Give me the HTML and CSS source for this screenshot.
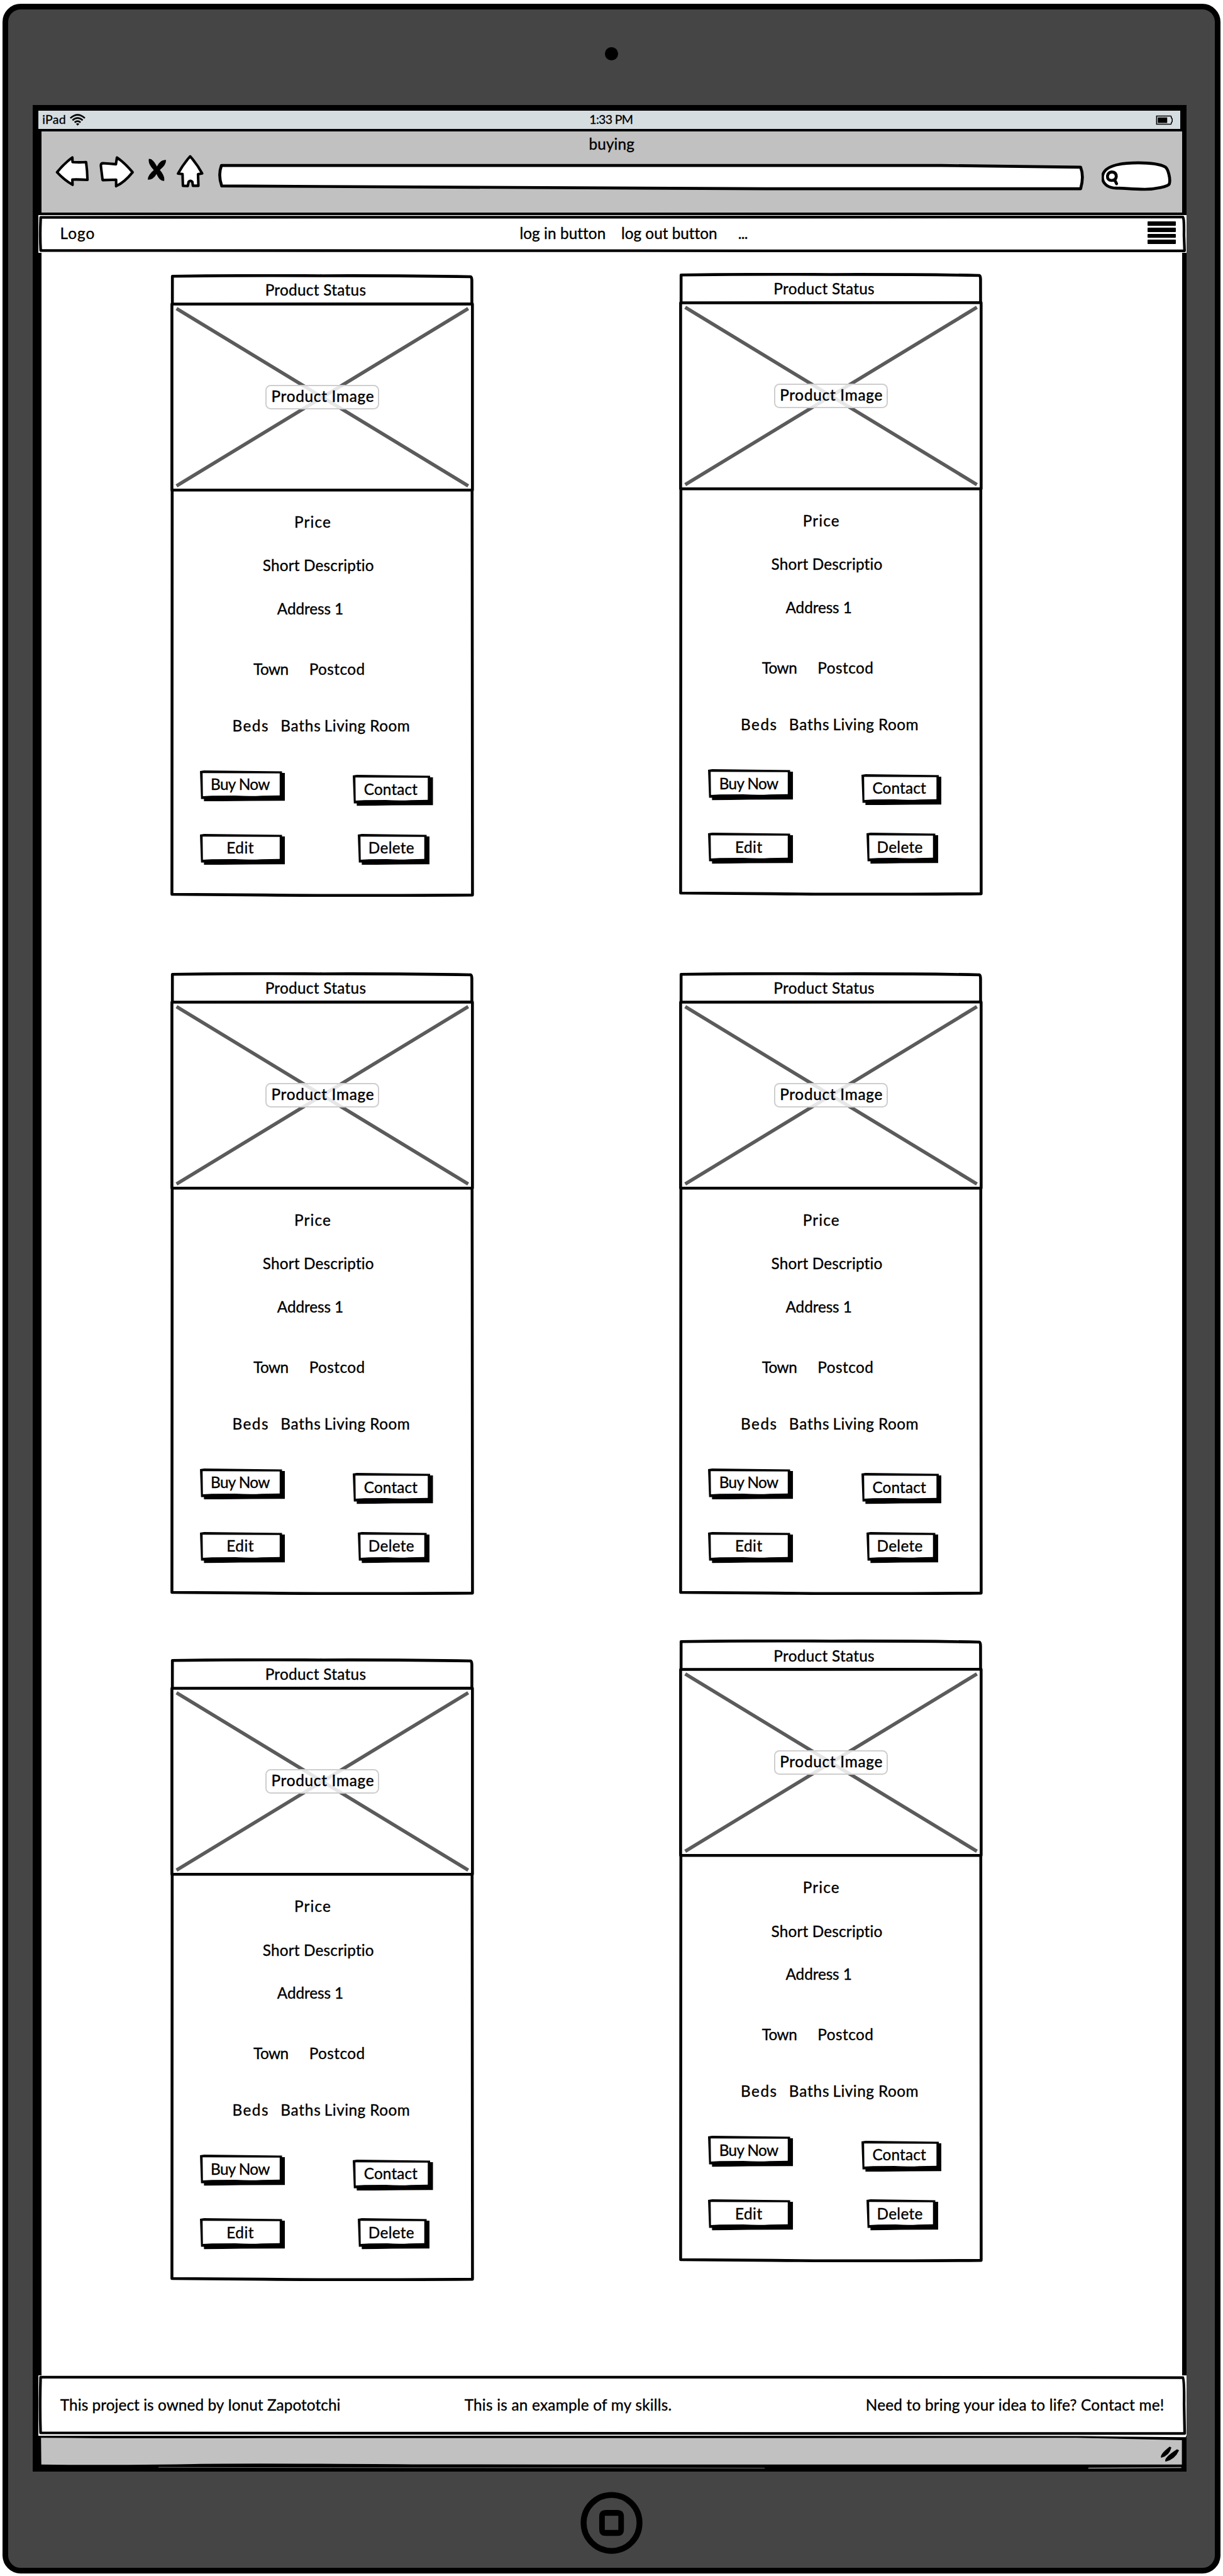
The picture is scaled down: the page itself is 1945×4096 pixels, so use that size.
FILE: index.html
```html
<!DOCTYPE html>
<html lang="en">
<head>
<meta charset="utf-8">
<title>buying</title>
<link rel="stylesheet" href="styles.css">
</head>
<body>
<svg class="defs" width="0" height="0" aria-hidden="true">
  <symbol id="card-outline" viewBox="0 0 516 1058">
    <path d="M3.4 3.4Q130 1.8 258 2.6Q400 2.2 510 4.2Q512.4 5 512.2 12L512.8 500L513.3 1054.6Q300 1056.2 160 1054.6L2.6 1053.4Q1.8 700 3 400Z" fill="none" stroke="#000" stroke-width="4.9" stroke-linejoin="round"/>
    <path d="M2.6 50.8L513.2 50.4V366.8H2.6Z" fill="#fff" stroke="#000" stroke-width="4.9" stroke-linejoin="round"/>
    <path d="M10.4 58.4L506 359.6M506 58.4L10.4 359.6" stroke="#5b5b5c" stroke-width="6"/>
  </symbol>
  <symbol id="btn-lg" viewBox="0 0 144.5 53">
    <path d="M0 1.2L7 0L139.5 1.5V4.4H144.5V51.5Q70 51.4 6.8 53V48.6H1.8Z"/>
    <path d="M4.5 4.6L135.5 5.2V42.4L105 43Q85 44.4 60 42.8L20 42.9L5 43.9Z" fill="#fff"/>
  </symbol>
  <symbol id="btn-md" viewBox="0 0 136.5 53">
    <path d="M0 1.2L7 0L131.5 1.5V4.4H136.5V51.5Q70 51.4 6.8 53V48.6H1.8Z"/>
    <path d="M4.5 4.6L127.5 5.2V42.4L99 43Q79 44.4 56 42.8L20 42.9L5 43.9Z" fill="#fff"/>
  </symbol>
  <symbol id="btn-sm" viewBox="0 0 122 53">
    <path d="M0 1.2L7 0L117 1.5V4.4H122V51.5Q60 51.4 6.8 53V48.6H1.8Z"/>
    <path d="M4.5 4.6L113 5.2V42.4L88 43Q70 44.4 50 42.8L20 42.9L5 43.9Z" fill="#fff"/>
  </symbol>
</svg>

<div class="device">
  <div class="bezel-top"><span class="camera"></span></div>

  <div class="screen">
    <div class="status-bar">
      <span class="carrier">iPad</span>
      <svg class="wifi" viewBox="175 54 90 93" width="30" height="31"><g fill="none" stroke="#000" stroke-width="8.5"><path d="M181 92Q218 58 255 92"/><path d="M192 103Q218 80 244 103"/><path d="M203 114Q218 101 233 114"/></g><path d="M210 121Q218 116 227 121L218 130Z"/></svg>
      <span class="time">1:33 PM</span>
      <svg class="battery" viewBox="0 0 30 31" width="30" height="31"><path d="M1.5 9H25.5Q26.500 9 26.500 12L28 14V18.500L26.500 20.500Q26.500 23 25.500 23H1.500Z" fill="none" stroke="#000" stroke-width="1.700"/><path d="M3.500 11.500H19.500V20.800H3.500Z"/></svg>
    </div>

    <div class="toolbar">
      <div class="title">buying</div>
      <div class="controls">
        <svg class="back" viewBox="100 270 180 210" width="60" height="70"><path d="M112 369Q150 322 190 294L191 317Q225 320 260 317Q266 360 267 408Q230 405 190 406L191 433Q148 408 112 369Z"/></svg>
        <svg class="forward" viewBox="320 270 190 210" width="63.300" height="70"><path d="M334 335Q334 323 345 323Q380 326 411 328L416 294Q455 320 496 369Q455 420 412 440V407Q375 408 343 409Q338 370 334 335Z"/></svg>
        <svg class="stop" viewBox="570 270 110 210" width="36.700" height="70"><path d="M582 301Q602 298 623 340Q640 305 669 306Q672 330 638 357Q665 388 660 413Q638 416 621 378Q604 408 577 407Q575 385 607 358Q576 325 582 301Z"/></svg>
        <svg class="home" viewBox="720 270 145 210" width="48.300" height="70"><path d="M792 288Q829 330 853 375L832 379L834 438H806L803 418Q793 408 784 418L780 439L755 438L753 378L730 376Q758 325 792 288Z"/></svg>
        <svg class="address" viewBox="370 260 1476 70" width="1476" height="70"><path d="M376.500 281.500H1600L1836.500 284.500Q1842.500 300 1836.500 321H1300L377 316.300Q370.500 298 376.500 281.500Z"/></svg>
        <svg class="search" viewBox="1872 260 124 70" width="124" height="70"><g transform="translate(-2.600 0)"><path d="M1876 302C1876 286 1896 277 1937 277C1960 277 1975 280 1982.600 284C1988 288 1992 305 1989.500 313C1988 317 1965 322 1948 322C1925 322 1915 320 1900 320C1885 320 1876 312 1876 302Z"/><path d="M1897 306.500L1900 312.500M1892 292.500Q1899.500 293 1899.500 300.500Q1898.500 307 1891.500 307Q1884 306.500 1884.500 299.500Q1885.500 293 1892 292.500Z"/></g></svg>
      </div>
    </div>

    <div class="navbar">
      <svg class="frame" viewBox="66 366 1950 64"><path d="M69.500 369.800Q700 368 1300 369.500L2010.500 369.300Q2013 370 2012.500 400L2013.500 426.700H1300L69.500 426.200Q68 400 69.500 369.800Z"/></svg>
      <span class="logo">Logo</span>
      <span class="login">log in button</span>
      <span class="logout">log out button</span>
      <span class="more">...</span>
      <span class="burger"><i></i><i></i><i></i><i></i></span>
    </div>

    <div class="content">
      <div class="column column-left">
        <div class="card">
          <svg class="outline"><use href="#card-outline"/></svg>
          <div class="status">Product Status</div>
          <div class="image"><span>Product Image</span></div>
          <div class="price">Price</div>
          <div class="description">Short Descriptio</div>
          <div class="street">Address 1</div>
          <div class="place"><span class="town">Town</span><span class="postcode">Postcod</span></div>
          <div class="rooms"><span class="beds">Beds</span><span class="baths">Baths</span><span class="living">Living Room</span></div>
          <div class="actions"><div class="btn buy"><svg class="shape"><use href="#btn-lg"/></svg><span>Buy Now</span></div><div class="btn contact"><svg class="shape"><use href="#btn-md"/></svg><span>Contact</span></div></div>
          <div class="actions manage"><div class="btn edit"><svg class="shape"><use href="#btn-lg"/></svg><span>Edit</span></div><div class="btn delete"><svg class="shape"><use href="#btn-sm"/></svg><span>Delete</span></div></div>
        </div>
        <div class="card">
          <svg class="outline"><use href="#card-outline"/></svg>
          <div class="status">Product Status</div>
          <div class="image"><span>Product Image</span></div>
          <div class="price">Price</div>
          <div class="description">Short Descriptio</div>
          <div class="street">Address 1</div>
          <div class="place"><span class="town">Town</span><span class="postcode">Postcod</span></div>
          <div class="rooms"><span class="beds">Beds</span><span class="baths">Baths</span><span class="living">Living Room</span></div>
          <div class="actions"><div class="btn buy"><svg class="shape"><use href="#btn-lg"/></svg><span>Buy Now</span></div><div class="btn contact"><svg class="shape"><use href="#btn-md"/></svg><span>Contact</span></div></div>
          <div class="actions manage"><div class="btn edit"><svg class="shape"><use href="#btn-lg"/></svg><span>Edit</span></div><div class="btn delete"><svg class="shape"><use href="#btn-sm"/></svg><span>Delete</span></div></div>
        </div>
        <div class="card">
          <svg class="outline"><use href="#card-outline"/></svg>
          <div class="status">Product Status</div>
          <div class="image"><span>Product Image</span></div>
          <div class="price">Price</div>
          <div class="description">Short Descriptio</div>
          <div class="street">Address 1</div>
          <div class="place"><span class="town">Town</span><span class="postcode">Postcod</span></div>
          <div class="rooms"><span class="beds">Beds</span><span class="baths">Baths</span><span class="living">Living Room</span></div>
          <div class="actions"><div class="btn buy"><svg class="shape"><use href="#btn-lg"/></svg><span>Buy Now</span></div><div class="btn contact"><svg class="shape"><use href="#btn-md"/></svg><span>Contact</span></div></div>
          <div class="actions manage"><div class="btn edit"><svg class="shape"><use href="#btn-lg"/></svg><span>Edit</span></div><div class="btn delete"><svg class="shape"><use href="#btn-sm"/></svg><span>Delete</span></div></div>
        </div>
      </div>
      <div class="column column-right">
        <div class="card">
          <svg class="outline"><use href="#card-outline"/></svg>
          <div class="status">Product Status</div>
          <div class="image"><span>Product Image</span></div>
          <div class="price">Price</div>
          <div class="description">Short Descriptio</div>
          <div class="street">Address 1</div>
          <div class="place"><span class="town">Town</span><span class="postcode">Postcod</span></div>
          <div class="rooms"><span class="beds">Beds</span><span class="baths">Baths</span><span class="living">Living Room</span></div>
          <div class="actions"><div class="btn buy"><svg class="shape"><use href="#btn-lg"/></svg><span>Buy Now</span></div><div class="btn contact"><svg class="shape"><use href="#btn-md"/></svg><span>Contact</span></div></div>
          <div class="actions manage"><div class="btn edit"><svg class="shape"><use href="#btn-lg"/></svg><span>Edit</span></div><div class="btn delete"><svg class="shape"><use href="#btn-sm"/></svg><span>Delete</span></div></div>
        </div>
        <div class="card">
          <svg class="outline"><use href="#card-outline"/></svg>
          <div class="status">Product Status</div>
          <div class="image"><span>Product Image</span></div>
          <div class="price">Price</div>
          <div class="description">Short Descriptio</div>
          <div class="street">Address 1</div>
          <div class="place"><span class="town">Town</span><span class="postcode">Postcod</span></div>
          <div class="rooms"><span class="beds">Beds</span><span class="baths">Baths</span><span class="living">Living Room</span></div>
          <div class="actions"><div class="btn buy"><svg class="shape"><use href="#btn-lg"/></svg><span>Buy Now</span></div><div class="btn contact"><svg class="shape"><use href="#btn-md"/></svg><span>Contact</span></div></div>
          <div class="actions manage"><div class="btn edit"><svg class="shape"><use href="#btn-lg"/></svg><span>Edit</span></div><div class="btn delete"><svg class="shape"><use href="#btn-sm"/></svg><span>Delete</span></div></div>
        </div>
        <div class="card">
          <svg class="outline"><use href="#card-outline"/></svg>
          <div class="status">Product Status</div>
          <div class="image"><span>Product Image</span></div>
          <div class="price">Price</div>
          <div class="description">Short Descriptio</div>
          <div class="street">Address 1</div>
          <div class="place"><span class="town">Town</span><span class="postcode">Postcod</span></div>
          <div class="rooms"><span class="beds">Beds</span><span class="baths">Baths</span><span class="living">Living Room</span></div>
          <div class="actions"><div class="btn buy"><svg class="shape"><use href="#btn-lg"/></svg><span>Buy Now</span></div><div class="btn contact"><svg class="shape"><use href="#btn-md"/></svg><span>Contact</span></div></div>
          <div class="actions manage"><div class="btn edit"><svg class="shape"><use href="#btn-lg"/></svg><span>Edit</span></div><div class="btn delete"><svg class="shape"><use href="#btn-sm"/></svg><span>Delete</span></div></div>
        </div>
      </div>
    </div>

    <div class="footer">
      <svg class="frame" viewBox="66 4036 1950 102"><path d="M69.500 4039Q700 4038 1300 4039L2010.500 4039.800Q2013 4041 2012.500 4085L2013.500 4134.700H1300L69.500 4133.700Q68 4090 69.500 4039Z"/></svg>
      <span class="owner">This project is owned by Ionut Zapototchi</span>
      <span class="example">This is an example of my skills.</span>
      <span class="pitch">Need to bring your idea to life? Contact me!</span>
    </div>

    <div class="bottom-bar">
      <svg viewBox="66 4138 1950 61" width="1950" height="61">
        <path d="M1400 4138H2016V4140.500H2008L1840 4138.500Z" fill="#fff"/>
        <path d="M70.500 4141.400Q250 4143 450 4142H1500L1830 4141.400L2009 4145.400V4187H1300Q1000 4187 700 4186.500Q420 4184.500 330 4186Q180 4188.500 71 4186.800Z" fill="#c1c1c1"/>
        <path d="M270 4191.600Q500 4192.300 1000 4192.300L1300 4193" fill="none" stroke="#999" stroke-width=".8"/>
        <path d="M1850 4193L2008 4192" fill="none" stroke="#999" stroke-width="1.600"/>
        <path transform="translate(-3.300 0)" d="M1991.500 4156.300L1994.500 4158Q1991 4172 1977 4175.500Q1974 4170 1991.500 4156.300ZM2004 4161L2007.500 4162.500Q2001 4178 1984.500 4182Q1980.500 4176 2004 4161Z"/>
      </svg>
    </div>
  </div>

  <div class="bezel-bottom">
    <svg viewBox="0 0 106 106" width="106" height="106"><circle cx="53" cy="53" r="47.500" fill="none" stroke="#000" stroke-width="10"/><path fill-rule="evenodd" d="M43 31H63Q74 31 74 42V64Q74 75 63 75H43Q32 75 32 64V42Q32 31 43 31ZM41.500 41V65H64.500V41Z"/></svg>
  </div>
</div>
</body>
</html>
```
FILE: styles.css
```css
* { box-sizing: border-box; }

html, body { margin: 0; padding: 0; background: #fff; }

body {
  width: 1945px;
  height: 4096px;
  overflow: hidden;
  color: #000;
  font-family: Lato, "Liberation Sans", sans-serif;
}

svg { display: block; flex: none; }
.defs { position: absolute; }

/* the tablet is laid out on a 2078 x 4376 board */
.device {
  zoom: 0.936;
  display: flex;
  flex-direction: column;
  width: 2070px;
  height: 4366px;
  margin: 6px 0 0 4px;
  border: 10px solid #000;
  border-radius: 31px;
  background: #454545;
  font-size: 26px;
  line-height: 32px;
  white-space: nowrap;
  -webkit-text-stroke: 0.4px #000;
}

.bezel-top { display: flex; justify-content: center; height: 163px; padding-top: 65px; }
.camera { width: 22px; height: 22px; border-radius: 50%; background: #000; }
.bezel-bottom { display: flex; justify-content: center; padding-top: 34px; }

.screen {
  width: 1960.500px;
  height: 4020px;
  margin-left: 42px;
  padding-top: 9px;
  background: #000;
}

/* status bar */
.status-bar {
  display: flex;
  width: 1940px;
  height: 31px;
  margin-left: 10px;
  background: #d6dde0;
  font-size: 21px;
  line-height: 29px;
  -webkit-text-stroke-width: 0.3px;
}
.carrier { width: 52.3px; padding-left: 6.3px; letter-spacing: 0.2px; }
.time { width: 100px; margin-left: 853.500px; letter-spacing: -0.78px; }
.battery { margin-left: 862.7px; }

/* browser toolbar */
.toolbar {
  width: 1939px;
  height: 137px;
  margin: 5px 0 0 14.5px;
  padding-top: 4px;
  background: #c1c1c1;
}
.title { position: relative; top: 1px; padding-left: 930.500px; letter-spacing: 0.1px; }
.controls { display: flex; padding-left: 22.8px; }
.controls path { fill: #fff; stroke: #000; stroke-width: 13; stroke-linejoin: round; stroke-linecap: round; }
.controls .stop path { fill: #000; stroke: none; }
.controls .address path, .controls .search path { stroke-width: 5; }
.forward { margin-left: 13.3px; }
.stop { margin-left: 20px; }
.home { margin-left: 13.3px; }
.address { margin-left: 21.7px; }
.search { margin-left: 26px; }

/* page header and footer */
.navbar, .footer {
  position: relative;
  display: flex;
  width: 1950.500px;
  margin-left: 10px;
  background: #fff;
}
.navbar { height: 64px; margin-top: 5px; padding: 14.7px 0 0 36.500px; }
.footer { height: 102px; padding: 34px 0 0 36.800px; }
.bottom-bar { width: 1950px; margin-left: 10px; }
.frame { position: absolute; inset: 0; width: 100%; height: 100%; }
.frame path { fill: none; stroke: #000; stroke-width: 4.6; stroke-linejoin: round; }
.logo { width: 780.9px; letter-spacing: 1.15px; }
.login { width: 172.600px; letter-spacing: 0.08px; }
.logout { width: 198.500px; letter-spacing: 0; font-variant-ligatures: none; }
.more { width: 695.500px; letter-spacing: -0.8px; }
.burger { display: flex; flex-direction: column; gap: 3.3px; margin-top: -3.7px; }
.burger i { width: 48px; height: 7px; border-radius: 1px; background: #000; }
.owner { width: 686.800px; letter-spacing: 0.08px; }
.example { width: 681.700px; letter-spacing: 0.25px; }
.pitch { letter-spacing: 0.235px; }

/* product listing */
.content {
  display: flex;
  gap: 348px;
  width: 1938.300px;
  height: 3606px;
  margin-left: 15px;
  padding-left: 219.4px;
  background: #fff;
}
.column { width: 516px; }
.column-left { padding-top: 36px; }
.column-right { padding-top: 34.300px; }
.card { position: relative; height: 1058px; }
.column-left .card + .card { margin-top: 128px; }
.column-left .card:last-child { margin-top: 108px; }
.column-right .card + .card { margin-top: 129.700px; }
.column-right .card:last-child { margin-top: 76px; }
.outline, .shape { position: absolute; inset: 0; width: 100%; height: 100%; }
.card > div { position: relative; }

.status { height: 48px; padding: 11px 0 0 160.500px; letter-spacing: 0.32px; }
.image { height: 322.500px; padding: 140px 0 0 161.400px; }
.image span {
  display: block;
  width: 193.200px;
  height: 42px;
  padding-left: 7.500px;
  border: 2.200px solid #cecece;
  border-radius: 9px;
  background: rgba(255, 255, 255, 0.85);
  line-height: 35px;
  letter-spacing: 0.78px;
  -webkit-text-stroke-width: 0.5px;
}
.price { margin-top: 34.500px; padding-left: 210.100px; letter-spacing: 1.2px; }
.description { margin-top: 42px; padding-left: 156.400px; letter-spacing: 0.2px; }
.street { margin-top: 41.600px; padding-left: 181px; letter-spacing: -0.1px; }
.place { display: flex; margin-top: 70.400px; padding-left: 140.700px; }
.town { width: 94.600px; letter-spacing: -0.63px; }
.postcode { letter-spacing: 0.5px; }
.rooms { display: flex; margin-top: 64px; padding-left: 104.700px; }
.beds { width: 82px; letter-spacing: 1.6px; }
.baths { width: 74.500px; letter-spacing: 0.9px; }
.living { letter-spacing: 0.5px; }

.actions { display: flex; height: 60.500px; margin-top: 60px; padding-left: 49.400px; }
.manage { margin-top: 47.500px; }
.btn { position: relative; height: 53px; padding-top: 8px; }
.btn span { position: relative; }
.buy { width: 144.500px; padding-left: 18.600px; letter-spacing: -0.68px; }
.contact { width: 136.500px; margin: 8px 0 0 115.500px; padding-left: 19px; letter-spacing: 0.15px; }
.edit { width: 144.500px; padding-left: 45.600px; letter-spacing: 0.5px; }
.delete { width: 122px; margin-left: 124px; padding-left: 18px; letter-spacing: 0.36px; }
```
